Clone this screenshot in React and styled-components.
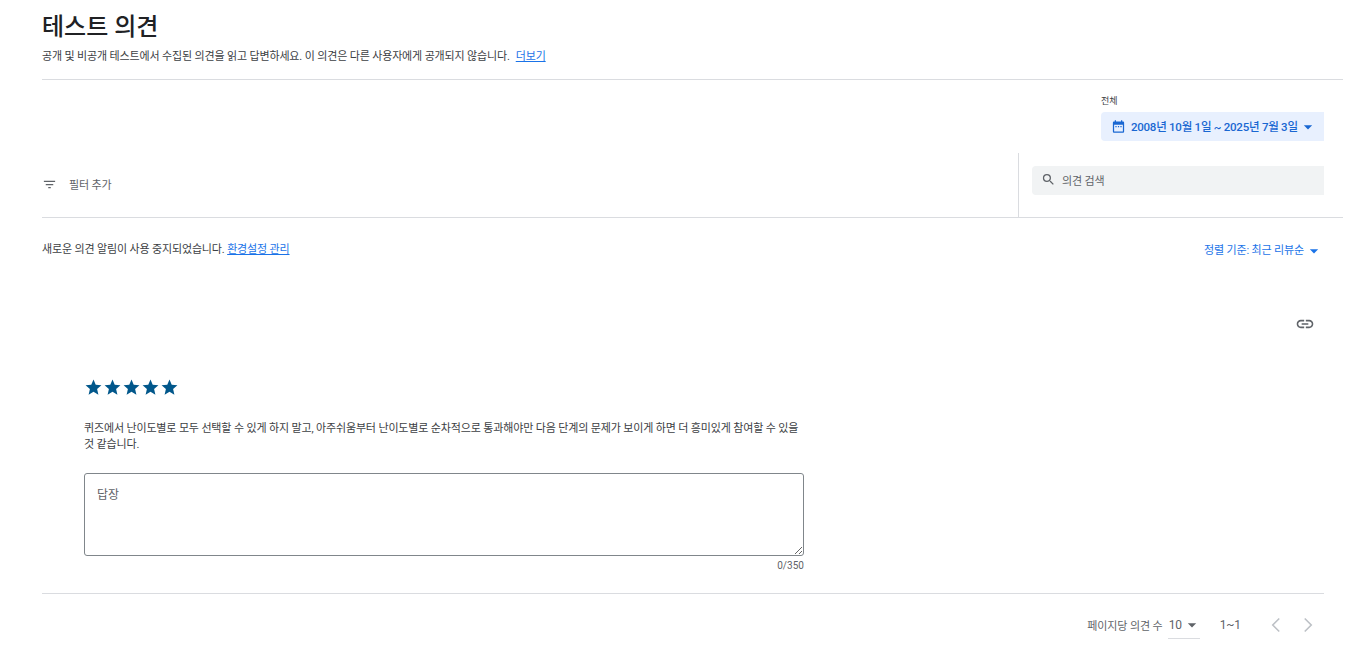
import React from 'react'
import styled, { createGlobalStyle } from 'styled-components'

const GlobalStyle = createGlobalStyle`
  html, body { margin: 0; padding: 0; background: #fff; }
  body {
    font-family: Roboto, "Noto Sans CJK KR", "Liberation Sans", sans-serif;
    color: #202124;
    overflow: hidden;
  }
  svg { flex: none; display: block; }
`

const Page = styled.div`
  width: 1356px;
  height: 669px;
  box-sizing: border-box;
  padding: 0 13px 0 42px;
  display: flex;
  flex-direction: column;
`

const Header = styled.header`
  height: 80px;
  box-sizing: border-box;
  padding-top: 11px;
  border-bottom: 1px solid #dadce0;
`

const Title = styled.h1`
  margin: 0;
  font-size: 24px;
  line-height: 32px;
  font-weight: 500;
  color: #202124;
`

const Subtitle = styled.p`
  margin: 6px 0 0;
  font-size: 11px;
  line-height: 16px;
  letter-spacing: -0.15px;
  color: #3c4043;
`

const TextLink = styled.a`
  color: #1a73e8;
  text-decoration: underline;
  margin-left: ${p => p.$gap || 0}px;
`

const DateBlock = styled.div`
  height: 73px;
  padding: 14px 19px 0 0;
  box-sizing: border-box;
  display: flex;
  flex-direction: column;
  align-items: flex-end;
`

const DateLabel = styled.div`
  width: 223px;
  font-size: 9px;
  line-height: 14px;
  color: #3c4043;
  margin-bottom: 4px;
`

const DateButton = styled.button`
  width: 223px;
  height: 29px;
  border: 0;
  border-radius: 4px 0 0 4px;
  background: #e8f0fe;
  color: #1967d2;
  display: flex;
  align-items: center;
  padding: 0 0 0 10px;
  font: 500 11.5px/16px Roboto, "Noto Sans CJK KR", sans-serif;
  letter-spacing: -0.25px;
  white-space: nowrap;
`

const DateIcon = styled.svg`
  margin-right: 5px;
`

const FilterRow = styled.div`
  height: 65px;
  box-sizing: border-box;
  display: flex;
  border-bottom: 1px solid #dadce0;
`

const FilterAdd = styled.div`
  flex: 0 0 977px;
  box-sizing: border-box;
  border-right: 1px solid #dadce0;
  display: flex;
  align-items: center;
  padding-bottom: 2px;
  gap: 12px;
  font-size: 11px;
  letter-spacing: -0.15px;
  color: #5f6368;
`

const SearchCell = styled.div`
  flex: 1;
  padding: 13px 19px 0 13px;
`

const SearchBox = styled.div`
  height: 29px;
  box-sizing: border-box;
  border-radius: 4px 0 0 4px;
  background: #f1f3f4;
  display: flex;
  align-items: center;
  padding: 0 0 2px 9px;
  gap: 6px;
  font-size: 11px;
  letter-spacing: -0.15px;
  color: #5f6368;
`

const NoticeRow = styled.div`
  display: flex;
  justify-content: space-between;
  align-items: flex-start;
  padding: 24px 19px 0 0;
  height: 96px;
  box-sizing: border-box;
  font-size: 11px;
  line-height: 16px;
  letter-spacing: -0.15px;
  color: #3c4043;
`

const SortButton = styled.div`
  display: flex;
  align-items: center;
  padding-top: 1px;
  color: #1a73e8;
  height: 16px;
`

const LinkRow = styled.div`
  display: flex;
  justify-content: flex-end;
  padding-right: 28px;
  height: 64px;
`

const Review = styled.section`
  padding-left: 42px;
  margin-right: 19px;
  height: 216px;
  box-sizing: border-box;
  border-bottom: 1px solid #dadce0;
`

const Stars = styled.div`
  display: flex;
  height: 20px;
`

const ReviewText = styled.p`
  width: 720px;
  margin: 23px 0 0;
  font-size: 11px;
  line-height: 16px;
  letter-spacing: -0.15px;
  color: #3c4043;
`

const Reply = styled.textarea`
  display: block;
  width: 720px;
  height: 83px;
  margin-top: 20px;
  box-sizing: border-box;
  border: 1px solid #80868b;
  border-radius: 3px;
  padding: 12px;
  font: 12px/18px Roboto, "Noto Sans CJK KR", sans-serif;
  outline: none;
  resize: both;
  &::placeholder { color: #5f6368; opacity: 1; }
`

const Counter = styled.div`
  width: 720px;
  text-align: right;
  font-size: 10px;
  line-height: 14px;
  margin-top: 3px;
  letter-spacing: 0.05px;
  color: #5f6368;
`

const Pager = styled.footer`
  display: flex;
  align-items: center;
  justify-content: flex-end;
  height: 62px;
  padding-right: 23px;
  font-size: 11px;
  letter-spacing: -0.1px;
  color: #5f6368;
`

const PageSize = styled.div`
  display: flex;
  align-items: center;
  width: 32px;
  height: 28px;
  margin: 0 20px 0 5px;
  padding-left: 1px;
  border-bottom: 1px solid #dadce0;
  box-sizing: border-box;
  font-size: 12px;
`

const Range = styled.span`
  font-size: 12px;
`

const PageArrows = styled.div`
  display: flex;
  gap: 8px;
  margin-left: 23px;
`

const Arrow = ({ flip }) => (
  <svg width="24" height="24" viewBox="0 0 24 24" fill="none" stroke="#bdc1c6" strokeWidth="1.6">
    <path d={flip ? 'M8.75 5.5 15.25 12l-6.5 6.5' : 'M15.25 5.5 8.75 12l6.5 6.5'} />
  </svg>
)

const Caret = ({ color }) => (
  <svg width="20" height="20" viewBox="0 0 24 24" fill={color}>
    <path d="M7 10l5 5 5-5z" />
  </svg>
)

const Star = () => (
  <svg width="19" height="19" viewBox="0 0 24 24" fill="#01578b">
    <path d="M12 17.27 18.18 21l-1.64-7.03L22 9.24l-7.19-.61L12 2 9.19 8.63 2 9.24l5.46 4.73L5.82 21z" />
  </svg>
)

export default function App() {
  return (
    <Page>
      <GlobalStyle />
      <Header>
        <Title>테스트 의견</Title>
        <Subtitle>
          공개 및 비공개 테스트에서 수집된 의견을 읽고 답변하세요. 이 의견은 다른 사용자에게 공개되지 않습니다.
          <TextLink $gap={6}>더보기</TextLink>
        </Subtitle>
      </Header>

      <DateBlock>
        <DateLabel>전체</DateLabel>
        <DateButton>
          <DateIcon width="15" height="15" viewBox="0 0 24 24" fill="#1967d2">
            <path d="M19 4h-1V2h-2v2H8V2H6v2H5c-1.1 0-2 .9-2 2v14c0 1.1.9 2 2 2h14c1.1 0 2-.9 2-2V6c0-1.1-.9-2-2-2zm0 16H5V9h14v11zM7 11h2v2H7zm4 0h2v2h-2zm4 0h2v2h-2z" />
          </DateIcon>
          2008년 10월 1일 ~ 2025년 7월 3일
          <Caret color="#1967d2" />
        </DateButton>
      </DateBlock>

      <FilterRow>
        <FilterAdd>
          <svg width="15" height="15" viewBox="0 0 24 24" fill="#5f6368">
            <path d="M10 18h4v-2h-4v2zM3 6v2h18V6H3zm3 7h12v-2H6v2z" />
          </svg>
          필터 추가
        </FilterAdd>
        <SearchCell>
          <SearchBox>
            <svg width="15" height="15" viewBox="0 0 24 24" fill="#5f6368">
              <path d="M15.5 14h-.79l-.28-.27A6.47 6.47 0 0 0 16 9.5 6.5 6.5 0 1 0 9.5 16c1.61 0 3.09-.59 4.23-1.57l.27.28v.79l5 4.99L20.49 19l-4.99-5zm-6 0C7.01 14 5 11.99 5 9.5S7.01 5 9.5 5 14 7.01 14 9.5 11.99 14 9.5 14z" />
            </svg>
            의견 검색
          </SearchBox>
        </SearchCell>
      </FilterRow>

      <NoticeRow>
        <span>
          새로운 의견 알림이 사용 중지되었습니다. <TextLink>환경설정 관리</TextLink>
        </span>
        <SortButton>
          정렬 기준: 최근 리뷰순
          <Caret color="#1a73e8" />
        </SortButton>
      </NoticeRow>

      <LinkRow>
        <svg width="20" height="20" viewBox="0 0 24 24" fill="#5f6368">
          <path d="M3.9 12c0-1.71 1.39-3.1 3.1-3.1h4V7H7c-2.76 0-5 2.24-5 5s2.24 5 5 5h4v-1.9H7c-1.71 0-3.1-1.39-3.1-3.1zM8 13h8v-2H8v2zm9-6h-4v1.9h4c1.71 0 3.1 1.39 3.1 3.1s-1.39 3.1-3.1 3.1h-4V17h4c2.76 0 5-2.24 5-5s-2.24-5-5-5z" />
        </svg>
      </LinkRow>

      <Review>
        <Stars>
          <Star /><Star /><Star /><Star /><Star />
        </Stars>
        <ReviewText>
          퀴즈에서 난이도별로 모두 선택할 수 있게 하지 말고, 아주쉬움부터 난이도별로 순차적으로 통과해야만 다음 단계의 문제가 보이게 하면 더 흥미있게 참여할 수 있을 것 같습니다.
        </ReviewText>
        <Reply placeholder="답장" />
        <Counter>0/350</Counter>
      </Review>

      <Pager>
        페이지당 의견 수
        <PageSize>
          10
          <Caret color="#5f6368" />
        </PageSize>
        <Range>1~1</Range>
        <PageArrows>
          <Arrow />
          <Arrow flip />
        </PageArrows>
      </Pager>
    </Page>
  )
}
